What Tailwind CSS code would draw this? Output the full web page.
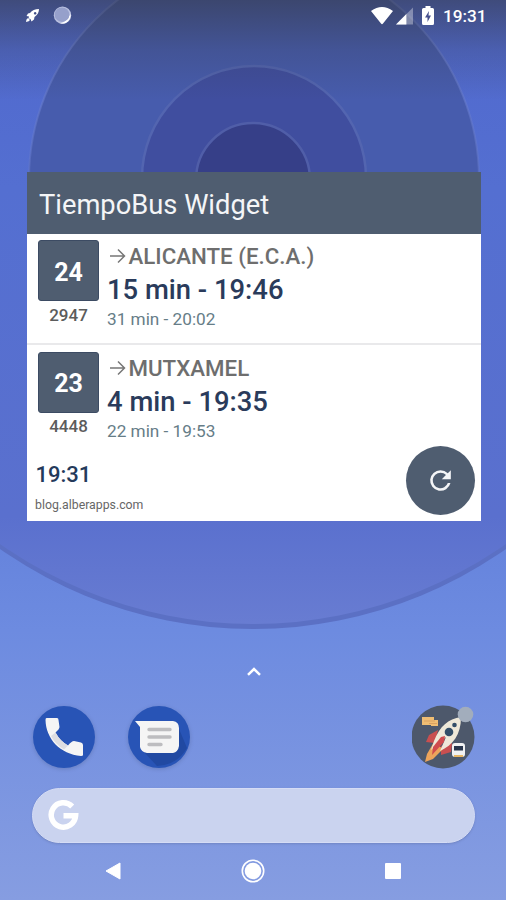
<!DOCTYPE html>
<html lang="es">
<head>
<meta charset="utf-8">
<title>TiempoBus Widget</title>
<script src="https://cdn.jsdelivr.net/npm/@tailwindcss/browser@4"></script>
</head>
<body class="w-[506px] h-[900px] overflow-hidden font-[Roboto,sans-serif]">
<div class="relative isolate w-[506px] h-[900px] overflow-hidden flex flex-col">
  <!-- wallpaper -->
  <svg class="absolute inset-0 -z-10" width="506" height="900" viewBox="0 0 506 900">
    <defs>
      <linearGradient id="sky" x1="0" y1="0" x2="0" y2="1">
        <stop offset="0" stop-color="#5069cf"/><stop offset=".58" stop-color="#6482dc"/><stop offset=".7" stop-color="#6d8be0"/><stop offset="1" stop-color="#869de1"/>
      </linearGradient>
      <linearGradient id="disc" gradientUnits="userSpaceOnUse" x1="0" y1="0" x2="0" y2="630">
        <stop offset="0" stop-color="#5068cd"/><stop offset=".3" stop-color="#546fd1"/><stop offset=".82" stop-color="#5a70ce"/><stop offset="1" stop-color="#697dd2"/>
      </linearGradient>
      <linearGradient id="edge" gradientUnits="userSpaceOnUse" x1="0" y1="0" x2="0" y2="180">
        <stop offset="0" stop-color="#6c80d2" stop-opacity=".7"/><stop offset="1" stop-color="#6478c8" stop-opacity=".5"/>
      </linearGradient>
      <linearGradient id="shade" x1="0" y1="0" x2="0" y2="1">
        <stop offset="0" stop-color="#343845" stop-opacity=".6"/><stop offset=".5" stop-color="#343845" stop-opacity=".22"/><stop offset="1" stop-color="#343845" stop-opacity="0"/>
      </linearGradient>
    </defs>
    <rect width="506" height="900" fill="url(#sky)"/>
    <circle cx="253" cy="189" r="440" fill="#5b70c4"/>
    <circle cx="253" cy="184.500" r="439.500" fill="url(#disc)"/>
    <circle cx="254" cy="179" r="225" fill="#475cad" stroke="url(#edge)" stroke-width="2"/>
    <circle cx="254" cy="178" r="112" fill="#404e9f" stroke="#5365b0" stroke-width="2.500"/>
    <circle cx="253" cy="180" r="57" fill="#363f88" stroke="#505ea8" stroke-width="2.500"/>
    <rect width="506" height="100" fill="url(#shade)"/>
  </svg>

  <!-- status bar -->
  <header class="h-[172px] shrink-0 flex items-start justify-between pl-[25px] pr-[19.500px] pt-[5px] text-white">
    <div class="flex items-center h-[21px] gap-[13px]">
      <svg width="15" height="15" viewBox="0 0 15 15" fill="#fff"><path fill-rule="evenodd" d="M14 1C10 1 7 2.500 5 5L3 5.500 1.500 8 4 8.500 3.500 10.500 5.500 11 6.500 13.500 9 11.500 9.500 9C12.500 7 14 4 14 1ZM10.200 4a1.300 1.300 0 1 1-.1 0Z"/><path d="M3 10 1.500 11.500 1 14 3.700 13.200 5 12Z"/></svg>
      <svg width="19" height="19" viewBox="0 0 19 19"><circle cx="9.500" cy="9.200" r="8.700" fill="#b9c0e0"/><path d="M17.500 8A8.200 8.200 0 0 1 7 17.200Q14 16 17.500 8Z" fill="#fff"/><circle cx="9" cy="8.700" r="7.300" fill="#96a0cb"/></svg>
    </div>
    <div class="flex items-center h-[22px]">
      <svg class="mr-[3px] -mt-px" width="22" height="19" viewBox="0 0 22 19"><path d="M0 5Q11-3 22 5L12 17.500Q11 19 10 17.500Z" fill="#fff"/></svg>
      <svg class="mr-[9px]" width="17" height="18" viewBox="0 0 18 18"><path d="M0 18 18 0V18Z" fill="#fff" fill-opacity=".35"/><path d="M0 18 11 7V18Z" fill="#fff"/></svg>
      <svg class="mr-[9px] -mt-px" width="12" height="19" viewBox="0 0 12 19"><path d="M1.500 2H3.500V0H8.500V2H10.500Q12 2 12 3.500V17.500Q12 19 10.500 19H1.500Q0 19 0 17.500V3.500Q0 2 1.500 2Z" fill="#fff"/><path d="M7 5 3 11.500H5.500V16L9 9.500H6.500Z" fill="#46508d"/></svg>
      <span class="text-[17.200px] leading-[22px] font-medium">19:31</span>
    </div>
  </header>

  <!-- bus times widget -->
  <main class="ml-[27px] w-[453.500px] h-[349px] shrink-0 bg-white flex flex-col">
    <h1 class="h-[62px] shrink-0 bg-[#4f5d70] text-[#f4f5f7] text-[27.300px] leading-[66px] pl-[12px] whitespace-nowrap">TiempoBus Widget</h1>
    <section class="h-[111px] shrink-0 border-b-2 border-[#e9e9eb] flex pl-[11px] pt-[6px]">
      <div class="w-[61px] flex flex-col items-center">
        <div class="w-[61px] h-[61px] rounded-[3px] bg-[#4f5d70] border border-[#3c4b63] text-white font-bold text-[25px] leading-[63px] text-center">24</div>
        <div class="text-[17px] leading-[20px] mt-[4px] font-medium text-[#5c5c5c] whitespace-nowrap">2947</div>
      </div>
      <div class="pl-[8px] whitespace-nowrap">
        <div class="flex items-center h-[33px] text-[#6e6e6e] text-[22.300px] font-medium"><svg class="mr-[2.500px] ml-[3px] -mt-[2px]" width="16" height="16" viewBox="0 0 16 16" fill="none" stroke="#777" stroke-width="1.500"><path d="M0 8H14.500M8 1.500 14.500 8 8 14.500"/></svg>ALICANTE (E.C.A.)</div>
        <div class="text-[27.400px] leading-[34px] font-medium text-[#2a3b5b]">15 min - 19:46</div>
        <div class="text-[17.200px] leading-[25px] text-[#667d87]">31 min - 20:02</div>
      </div>
    </section>
    <section class="h-[106px] shrink-0 flex pl-[11px] pt-[7px]">
      <div class="w-[61px] flex flex-col items-center">
        <div class="w-[61px] h-[61px] rounded-[3px] bg-[#4f5d70] border border-[#3c4b63] text-white font-bold text-[25px] leading-[62px] text-center">23</div>
        <div class="text-[17px] leading-[20px] mt-[3px] font-medium text-[#5c5c5c] whitespace-nowrap">4448</div>
      </div>
      <div class="pl-[8px] pt-px whitespace-nowrap">
        <div class="flex items-center h-[32px] text-[#6e6e6e] text-[22.300px] font-medium"><svg class="mr-[2.500px] ml-[3px] -mt-[2px]" width="16" height="16" viewBox="0 0 16 16" fill="none" stroke="#777" stroke-width="1.500"><path d="M0 8H14.500M8 1.500 14.500 8 8 14.500"/></svg>MUTXAMEL</div>
        <div class="text-[27.400px] leading-[34px] font-medium text-[#2a3b5b]">4 min - 19:35</div>
        <div class="text-[17.200px] leading-[25px] text-[#667d87]">22 min - 19:53</div>
      </div>
    </section>
    <footer class="h-[70px] flex justify-between pl-[8px] pr-[6px]">
      <div class="flex flex-col">
        <div class="text-[22px] leading-[26px] mt-[11px] ml-[0.500px] font-medium text-[#243a5b]">19:31</div>
        <div class="text-[12.300px] leading-[16px] mt-[9px] text-[#666]">blog.alberapps.com</div>
      </div>
      <button class="w-[69px] h-[69px] -mt-[5px] rounded-full bg-[#4f5d70] flex items-center justify-center">
        <svg width="31" height="31" viewBox="0 0 24 24" fill="#f4f5f7"><path d="M17.650 6.350A7.960 7.960 0 0 0 12 4a8 8 0 1 0 7.730 10h-2.080A6 6 0 1 1 12 6c1.660 0 3.140.69 4.220 1.780L13 11h7V4Z"/></svg>
      </button>
    </footer>
  </main>

  <!-- app drawer handle -->
  <div class="h-[184px] shrink-0 flex justify-center pt-[145px] pl-[1px]">
    <svg width="16" height="11" viewBox="0 0 16 11" fill="none" stroke="#fff" stroke-width="2.500"><path d="M2 8.800 8 3 14 8.800"/></svg>
  </div>

  <!-- dock -->
  <nav class="h-[64px] shrink-0 flex pl-[32px]">
    <svg class="drop-shadow-sm" width="64" height="64" viewBox="0 0 64 64">
      <circle cx="32" cy="32" r="31" fill="#2854b6"/>
      <path d="M14.500 13H25Q26.500 13 26.500 15L27.500 22Q27.500 24 23.500 27.500Q28 36 36 40.500Q39.500 36 42 36L49 37.500Q51 38 51 40V50Q51 51 49 51C28 49 14 34 13.500 15Q13.500 13 14.500 13Z" fill="#f5f5f5"/>
      <path d="M19 31 23.500 27.500Q28 36 36 40.500L32 44.500Q23 39 19 31Z" fill="#dedee2"/>
    </svg>
    <svg class="ml-[31px] drop-shadow-sm" width="64" height="64" viewBox="0 0 64 64">
      <circle cx="32" cy="32" r="31" fill="#2854b6"/>
      <path d="M16 46 30 61Q50 60 60 43L50 19Z" fill="#2149a2"/>
      <path d="M8 16H46Q52 17 52 23V41Q51 47 46 48H20Q14 47 13 42V22Z" fill="#f5f5f5"/>
      <path d="M22 24.500H43M22 32H43M22 39.500H34" stroke="#bdbdc0" stroke-width="3.400" stroke-linecap="round"/>
    </svg>
    <svg class="ml-[221px]" width="64" height="64" viewBox="0 0 64 64">
      <circle cx="31" cy="32" r="31.500" fill="#4d586b"/>
      <path d="M10 12H22V15H26V21H19V20H10Z" fill="#efbd73"/><path d="M12 16H23M17 18.500H25" stroke="#d9a162" stroke-width="1"/>
      <path d="M26 25 17 30 14 37 23 38ZM40 38 39 47 29 50 29 41Z" fill="#c94f50"/>
      <path d="M22 37 15 49 13 57 21 54 31 44Z" fill="#eda45b"/>
      <path d="M49 12C36 14 28 21 22 36L19 45 34 32 28 46C41 40 49 30 49 12Z" fill="#eee8d8"/>
      <path d="M21 42 29 32 33 31 32 37 20 50Z" fill="#d04b4d"/>
      <circle cx="37" cy="27" r="4.300" fill="#334e68"/><circle cx="42.500" cy="20" r="2.300" fill="#334e68"/>
      <rect x="40" y="38" width="13" height="14" rx="3" fill="#f0f1f2"/><rect x="42" y="41" width="9" height="4.500" fill="#29364c"/><path d="M42 52H51V50H42Z" fill="#e7b664"/>
      <circle cx="53.500" cy="9.500" r="7.800" fill="#a2adbc"/>
    </svg>
  </nav>

  <!-- search -->
  <div class="ml-[32px] mt-[19px] w-[443px] h-[55px] shrink-0 rounded-full bg-[#cad3ef] border border-[#d5dcf5] shadow-sm flex items-center pl-[15px]">
    <svg width="31" height="31" viewBox="0 0 31 31" fill="none" stroke="#fff" stroke-width="5.500"><path d="M24.200 6.500A12.200 12.200 0 1 0 27.600 15.800H15.500"/></svg>
  </div>

  <!-- navigation bar -->
  <div class="mt-[15px] h-[26px] shrink-0 flex items-center pl-[105px]">
    <svg width="16" height="18" viewBox="0 0 16 18"><path d="M1 9 15 1V17Z" fill="#fff" stroke="#fff" stroke-linejoin="round"/></svg>
    <svg class="ml-[120px]" width="24" height="24" viewBox="0 0 24 24"><circle cx="12" cy="12" r="10.700" fill="none" stroke="#fff" stroke-width="1.600"/><circle cx="12" cy="12" r="8.300" fill="#fff"/></svg>
    <div class="ml-[120px] w-[16px] h-[16px] bg-white rounded-[1px]"></div>
  </div>
</div>
</body>
</html>
